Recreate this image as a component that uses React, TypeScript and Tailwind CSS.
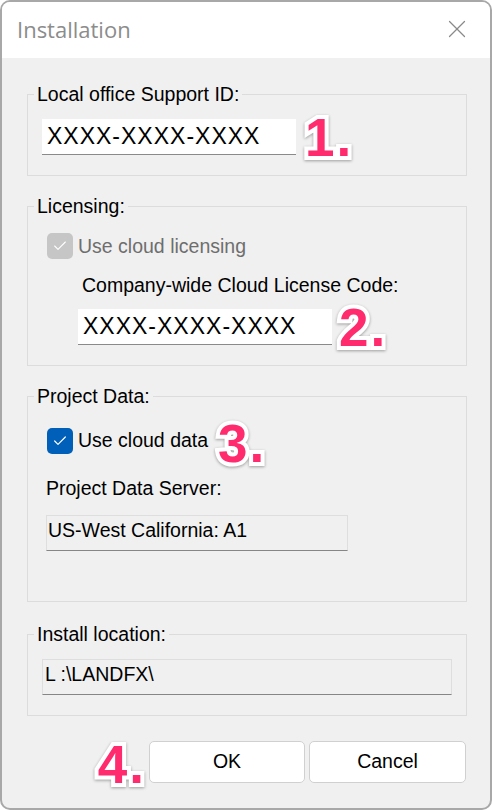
import { X, Check } from 'lucide-react';

const body = "font-['Liberation_Sans',Arial,sans-serif]";

function Step({ n, className = '' }: { n: string; className?: string }) {
    return (
        <span
            className={`font-['Liberation_Sans',Arial,sans-serif] font-bold text-[53px] leading-none text-[#ff2b6e] tracking-[2px] [-webkit-text-stroke:8px_white] [paint-order:stroke_fill] drop-shadow-[0_1px_1.5px_rgba(0,0,0,0.35)] ${className}`}
        >
            {n}
        </span>
    );
}

function Group({ label, children, className = '' }: { label: string; children: React.ReactNode; className?: string }) {
    return (
        <fieldset className={`border border-[#dcdcdc] pl-[6px] ${className}`}>
            <legend className="px-[3px] text-[19.5px] leading-[22px] text-black">{label}</legend>
            {children}
        </fieldset>
    );
}

function TextBox({ value, className = '' }: { value: string; className?: string }) {
    return (
        <div className={`h-[36px] bg-white border-b border-[#8a8a8a] flex items-center pl-[5px] text-[23px] tracking-[1px] text-black ${className}`}>
            {value}
        </div>
    );
}

function ReadBox({ value, className = '' }: { value: string; className?: string }) {
    return (
        <div className={`h-[36px] bg-[#f0f0f0] border border-[#dedede] border-b-[#868686] flex items-center pl-[1px] pb-[4px] text-[19.5px] text-black ${className}`}>
            {value}
        </div>
    );
}

export default function App() {
    return (
        <div className={`w-[492px] h-[810px] bg-[#f0f0f0] border-2 border-[#a8a8a8] rounded-[10px] overflow-hidden flex flex-col ${body}`}>
            {/* title bar */}
            <div className="h-[56px] bg-white flex items-center justify-between pl-[15px] pr-[18px] shrink-0">
                <span className="font-['Open_Sans',sans-serif] text-[22px] text-[#8c8c8c] pb-[2px]">Installation</span>
                <X size={30} strokeWidth={1} className="text-[#8a8a8a] mb-[2px]" />
            </div>

            <div className="flex flex-col pl-[25px] pr-[23px] pt-[25px]">
                {/* 1 */}
                <Group label="Local office Support ID:" className="pb-[20px]">
                    <div className="flex items-center gap-[9px] mt-[14px] pl-[8px] h-[36px]">
                        <TextBox value="XXXX-XXXX-XXXX" className="w-[254px]" />
                        <Step n="1." />
                    </div>
                </Group>

                {/* 2 */}
                <Group label="Licensing:" className="pb-[20px] mt-[19px]">
                    <div className="mt-[16px] pl-[13px] flex items-center gap-[5px] h-[26px]">
                        <span className="w-[26px] h-[26px] rounded-[5px] bg-[#c6c6c6] flex items-center justify-center">
                            <Check size={16} strokeWidth={1.6} className="text-white" />
                        </span>
                        <span className="text-[19.5px] text-[#6e6e6e] pt-[1px]">Use cloud licensing</span>
                    </div>
                    <div className="mt-[15px] pl-[48px] text-[19.5px] leading-[22px]">Company-wide Cloud License Code:</div>
                    <div className="flex items-center gap-[7px] mt-[13px] pl-[44px] h-[36px]">
                        <TextBox value="XXXX-XXXX-XXXX" className="w-[254px]" />
                        <Step n="2." />
                    </div>
                </Group>

                {/* 3 */}
                <Group label="Project Data:" className="pb-[50px] mt-[19px]">
                    <div className="mt-[21px] pl-[13px] flex items-center gap-[5px] h-[26px]">
                        <span className="w-[26px] h-[26px] rounded-[5px] bg-[#005fb8] flex items-center justify-center">
                            <Check size={16} strokeWidth={1.8} className="text-white" />
                        </span>
                        <span className="text-[19.5px] text-black">Use cloud data</span>
                        <Step n="3." className="ml-[5px] mt-[4px]" />
                    </div>
                    <div className="mt-[23px] pl-[12px] text-[19.5px] leading-[22px]">Project Data Server:</div>
                    <div className="mt-[16px] pl-[12px]">
                        <ReadBox value="US-West California: A1" className="w-[302px]" />
                    </div>
                </Group>

                {/* 4 */}
                <Group label="Install location:" className="pb-[20px] mt-[21px]">
                    <div className="mt-[14px] pl-[8px]">
                        <ReadBox value="L :\LANDFX\" className="w-[410px] pl-[2px]" />
                    </div>
                </Group>

                <div className="flex items-center justify-end gap-[4px] mt-[25px] pr-[1px] h-[42px]">
                    <Step n="4." className="mr-[-1px] mt-[4px]" />
                    <button className="w-[156px] h-[42px] bg-white border border-[#d0d0d0] rounded-[5px] text-[19.5px] text-black">OK</button>
                    <button className="w-[157px] h-[42px] bg-white border border-[#d0d0d0] rounded-[5px] text-[19.5px] text-black">Cancel</button>
                </div>
            </div>
        </div>
    );
}
